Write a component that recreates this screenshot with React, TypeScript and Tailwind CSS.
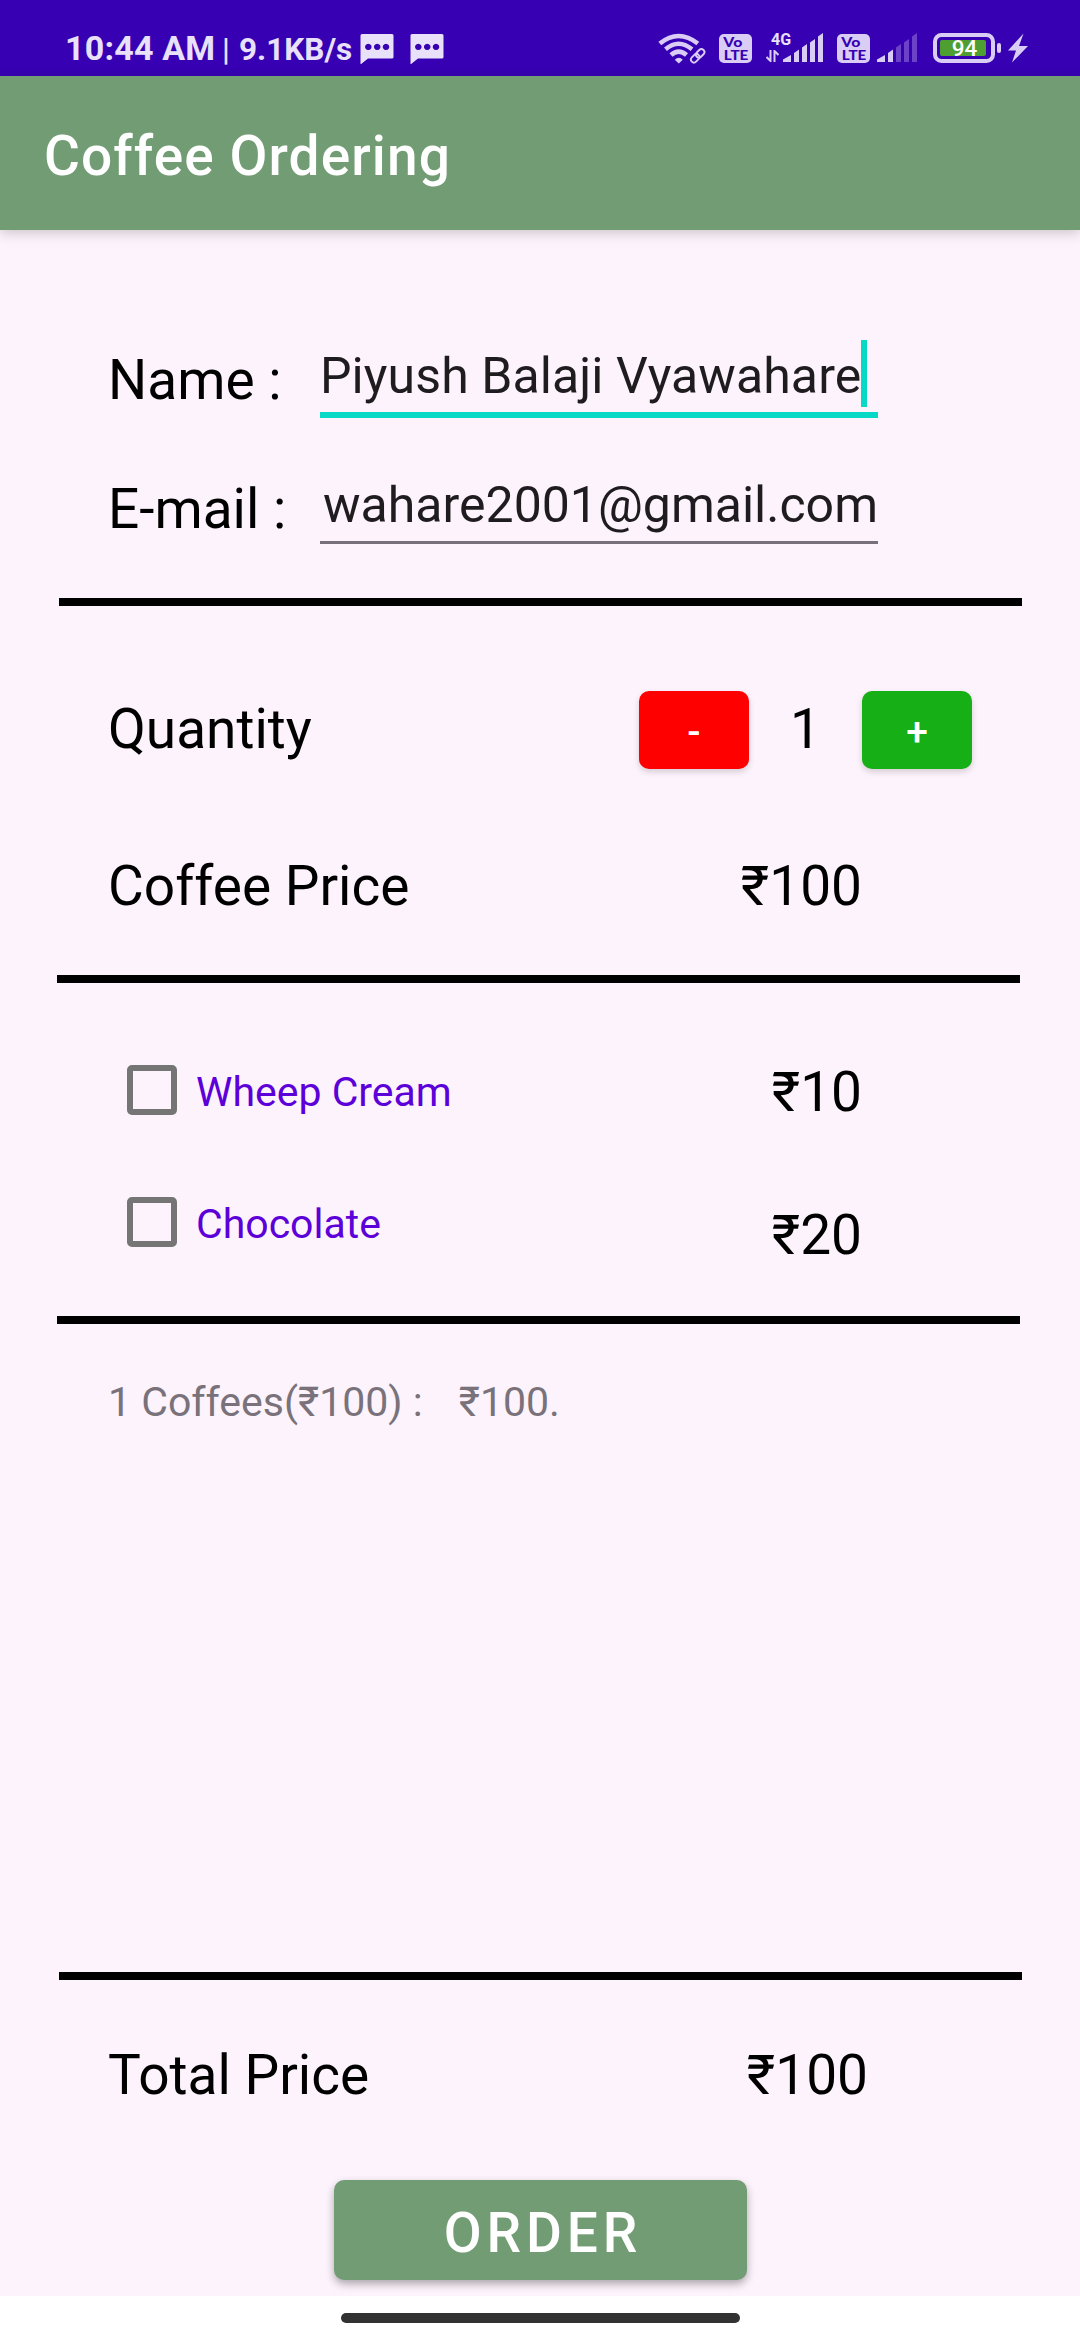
import { useState } from "react";

const RULE = {
  left: "ml-[57px] h-[8px] w-[963px] shrink-0 bg-black",
  right: "ml-[59px] h-[8px] w-[963px] shrink-0 bg-black",
};

function ChatIcon() {
  return (
    <svg width="34" height="30" viewBox="0 0 34 30" fill="#e9e0fa">
      <path
        fillRule="evenodd"
        d="M2 0H32Q33.500 0 33.500 1.500V23Q33.500 24.500 32 24.500H8L.5 30.500V1.500Q.5 0 2 0ZM8.300 9.700a3.200 3.200 0 1 0 .01 0ZM17.200 9.700a3.200 3.200 0 1 0 .01 0ZM26 9.700a3.200 3.200 0 1 0 .01 0Z"
      />
    </svg>
  );
}

function WifiIcon() {
  return (
    <svg width="48" height="32" viewBox="0 0 48 32" fill="none" stroke="#dacdf5">
      <path d="M1.800 10.500Q20.500 -4.500 39.800 10.500" strokeWidth="4.600" />
      <path d="M7.500 16.200Q20.500 5.200 34 16.200" strokeWidth="4.400" />
      <path d="M13 22Q20.700 15.200 28.500 22" strokeWidth="4.600" />
      <path d="M20.800 30.500L16.800 26.800Q20.800 22.500 24.800 26.800Z" fill="#dacdf5" stroke="none" />
      <g strokeWidth="1.900" transform="rotate(-45 39.500 23)">
        <rect x="31.500" y="20" width="9.500" height="6" rx="3" />
        <rect x="38.500" y="20" width="9.500" height="6" rx="3" />
      </g>
    </svg>
  );
}

function VolteIcon() {
  return (
    <svg width="33" height="29" viewBox="0 0 33 29">
      <rect width="33" height="29" rx="5" fill="#dacdf5" />
      <g fill="#3700b3" fontFamily="Lato, sans-serif" fontWeight="900">
        <text x="4.300" y="13" fontSize="13.500" textLength="19" lengthAdjust="spacingAndGlyphs">Vo</text>
        <text x="4.800" y="26" fontSize="13.500" textLength="24.500" lengthAdjust="spacingAndGlyphs">LTE</text>
      </g>
    </svg>
  );
}

function SignalIcon({ level }: { level: number }) {
  const bars = [
    "M0 29V26.500L8 22V29Z",
    "M11 29V20L16 16.500V29Z",
    "M19 29V14.500L24 11V29Z",
    "M27 29V9.500L32 6V29Z",
    "M35 29V3.500L40 0V29Z",
  ];
  return (
    <svg width="40" height="29" viewBox="0 0 40 29">
      {bars.map((d, i) => (
        <path key={d} d={d} fill={i < level ? "#dacdf5" : "#6c43c8"} />
      ))}
    </svg>
  );
}

function DataArrows() {
  return (
    <svg width="13" height="12" viewBox="0 0 13 12" fill="none" stroke="#dacdf5" strokeWidth="2">
      <path d="M4.500 0V11L0.500 7M8.500 12V1L12.500 5" />
    </svg>
  );
}

function BatteryIcon() {
  return (
    <svg width="68" height="30" viewBox="0 0 68 30">
      <rect x="2" y="2" width="58" height="26" rx="6.500" fill="none" stroke="#dacdf5" strokeWidth="4" />
      <rect x="7" y="7" width="46" height="16" rx="2" fill="#4f9e31" />
      <rect x="64" y="10" width="4" height="10" rx="2" fill="#dacdf5" />
      <text x="31.500" y="23.200" textAnchor="middle" fontFamily="Roboto, sans-serif" fontWeight="500" fontSize="22.500" fill="#fff">94</text>
    </svg>
  );
}

function BoltIcon() {
  return (
    <svg width="20" height="30" viewBox="0 0 20 30" fill="#dacdf5">
      <path d="M15.500 0.500L0 17.500H8L4 29.500L20 13H11Z" />
    </svg>
  );
}

function StatusBar() {
  return (
    <header className="flex h-[76px] shrink-0 items-start bg-[#3700b3] text-[#e9e0fa]">
      <div className="flex h-[76px] items-baseline pl-[65px] pt-[28px] font-bold leading-[40px]">
        <span className="w-[157px] whitespace-nowrap text-[34px] tracking-[0.2px]">10:44 AM</span>
        <span className="w-[17px] text-[31.500px] font-medium">|</span>
        <span className="w-[121px] text-[31.500px]">9.1KB/s</span>
      </div>
      <div className="flex gap-[16px] pt-[34px]">
        <ChatIcon />
        <ChatIcon />
      </div>
      <div className="ml-auto flex items-start pr-[52px] pt-[33px]">
        <WifiIcon />
        <div className="ml-[13px] mt-px"><VolteIcon /></div>
        <div className="-mt-[3px] ml-[14px] flex w-[17px] flex-col">
          <span className="pl-[5px] text-[16px] font-bold leading-[20px]">4G</span>
          <DataArrows />
        </div>
        <SignalIcon level={5} />
        <div className="ml-[14px] mt-px"><VolteIcon /></div>
        <div className="ml-[7px]"><SignalIcon level={2} /></div>
        <div className="ml-[16px]"><BatteryIcon /></div>
        <div className="ml-[7px]"><BoltIcon /></div>
      </div>
    </header>
  );
}

function Extra({ name, price, className }: { name: string; price: string; className: string }) {
  const [checked, setChecked] = useState(false);
  return (
    <div className="flex h-[50px] items-start justify-between pl-[127px] pr-[218px]">
      <button className="flex h-[50px] items-center gap-[19px]" onClick={() => setChecked(!checked)}>
        <span className="flex size-[50px] items-center justify-center rounded-[5px] border-[6px] border-[#757575]">
          {checked && <span className="size-[24px] bg-[#5c00d9]" />}
        </span>
        <span className="pt-[4px] text-[41px] leading-[48px] text-[#5c00d9]">{name}</span>
      </button>
      <span className={className}>{price}</span>
    </div>
  );
}

export default function App() {
  const [quantity, setQuantity] = useState(1);
  const total = quantity * 100;
  return (
    <div className="flex h-[2340px] w-[1080px] flex-col overflow-hidden bg-[#fdf3fc] font-[Roboto,sans-serif] text-[55px] leading-[64px] text-black">
      <StatusBar />
      <div className="relative flex h-[154px] shrink-0 items-center bg-[#729c73] pl-[44px] font-medium tracking-[1.100px] text-white shadow-[0_3px_12px_rgba(0,0,0,0.2)]">
        <h1 className="pt-[5px]">Coffee Ordering</h1>
      </div>

      <main className="flex flex-1 flex-col">
        <section className="flex flex-col pl-[108px] pt-[110px]">
          <div className="flex h-[129px] items-start">
            <label className="w-[212px] pt-[8px]">Name :</label>
            <div className="flex h-[78px] w-[558px] items-start border-b-[6px] border-[#08d9c7] text-[50px] leading-[67px] tracking-[0.080px] text-[#1f1c20]">
              <span className="pt-[3px]">Piyush Balaji Vyawahare</span>
              <span className="h-[67px] w-[6px] bg-[#08d9c7]" />
            </div>
          </div>
          <div className="flex h-[129px] items-start">
            <label className="w-[212px] pt-[8px]">E-mail :</label>
            <div className="flex h-[75px] w-[558px] items-start justify-end border-b-[3px] border-[#78707a] text-[50px] leading-[67px] text-[#1f1c20]">
              <span className="pt-[3px]">wahare2001@gmail.com</span>
            </div>
          </div>
        </section>
        <div className={RULE.right} />

        <section className="flex h-[369px] flex-col pt-[85px]">
          <div className="flex h-[78px] items-center pl-[108px] pr-[108px]">
            <span className="-mt-[2px] mr-auto">Quantity</span>
            <button
              className="h-[78px] w-[110px] rounded-[10px] bg-[#ff0000] pt-[3px] text-[39px] font-medium text-white shadow-[0_3px_6px_rgba(0,0,0,0.16)]"
              onClick={() => setQuantity(Math.max(1, quantity - 1))}
            >
              -
            </button>
            <span className="-mt-[2px] w-[113px] text-center">{quantity}</span>
            <button
              className="h-[78px] w-[110px] rounded-[10px] bg-[#16af15] pt-[3px] text-[39px] font-medium text-white shadow-[0_3px_6px_rgba(0,0,0,0.16)]"
              onClick={() => setQuantity(quantity + 1)}
            >
              +
            </button>
          </div>
          <div className="flex justify-between pl-[108px] pr-[218px] pt-[85px]">
            <span>Coffee Price</span>
            <span>₹100</span>
          </div>
        </section>
        <div className={RULE.left} />

        <section className="flex h-[333px] flex-col gap-[82px] pt-[82px]">
          <Extra name="Wheep Cream" price="₹10" className="-mt-[5px]" />
          <Extra name="Chocolate" price="₹20" className="mt-[6px]" />
        </section>
        <div className={RULE.left} />

        <section className="h-[648px] pl-[108px] pt-[54px]">
          <p className="flex gap-[36px] text-[41px] leading-[48px] text-[#79727a]">
            <span>{quantity} Coffees(₹100) :</span>
            <span>₹{total}.</span>
          </p>
        </section>
        <div className={RULE.right} />

        <section className="flex flex-col">
          <div className="flex justify-between pl-[108px] pr-[212px] pt-[63px]">
            <span>Total Price</span>
            <span>₹{total}</span>
          </div>
          <button className="ml-[334px] mt-[73px] h-[100px] w-[413px] rounded-[10px] bg-[#729c73] pl-[5px] pt-[6px] font-medium tracking-[0.0893em] text-white shadow-[0_4px_8px_rgba(0,0,0,0.32)]">
            ORDER
          </button>
        </section>
      </main>

      <footer className="relative flex h-[44px] shrink-0 justify-center bg-white pt-[17px]">
        <div className="h-[10px] w-[399px] rounded-full bg-[#323232]" />
      </footer>
    </div>
  );
}
